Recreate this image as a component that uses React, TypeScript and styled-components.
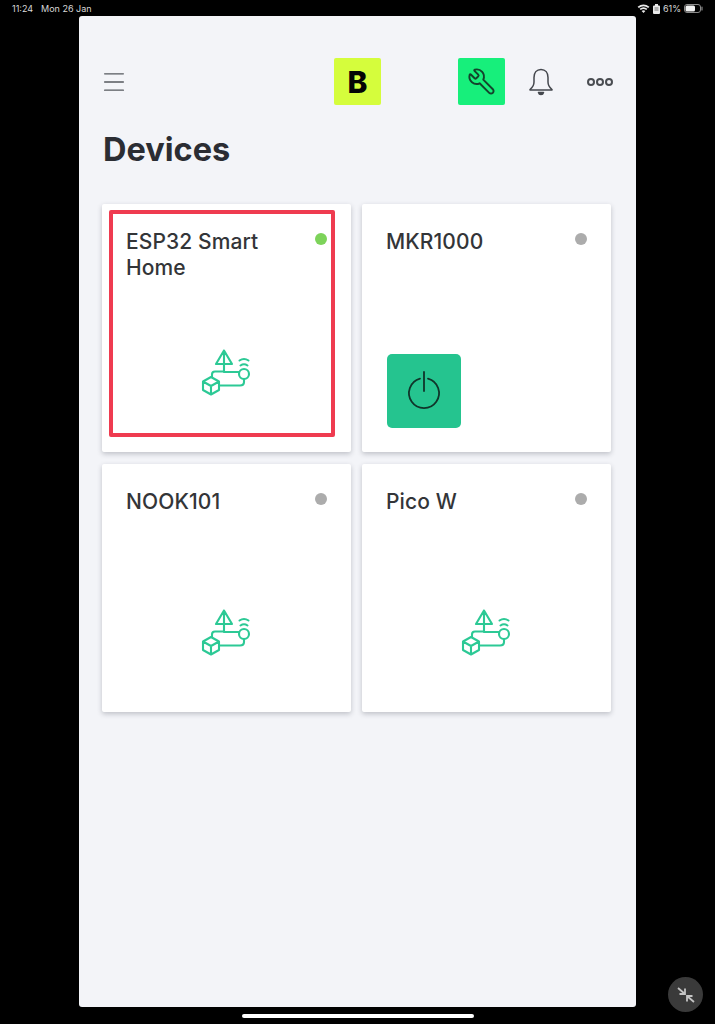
import React from 'react';
import styled, { createGlobalStyle } from 'styled-components';
import { Menu, Wrench } from 'lucide-react';

const GlobalStyle = createGlobalStyle`
  html, body {
    margin: 0;
    padding: 0;
    background: #000;
    font-family: Inter, "Liberation Sans", sans-serif;
  }
`;

const Screen = styled.div`
  position: relative;
  width: 715px;
  height: 1024px;
  overflow: hidden;
  background: #000;
`;

const StatusBar = styled.div`
  height: 16px;
  padding: 0 12px;
  display: flex;
  align-items: center;
  justify-content: space-between;
  color: #d8d8d8;
  font-size: 9px;
  box-sizing: border-box;
`;

const StatusLeft = styled.div`
  display: flex;
  gap: 8px;
  margin-top: 1px;
`;

const StatusRight = styled.div`
  display: flex;
  align-items: center;
  gap: 3px;
  margin-top: 1px;
`;

const Panel = styled.main`
  width: 557px;
  height: 991px;
  margin-left: 79px;
  padding: 0 22px 0 23px;
  box-sizing: border-box;
  background: #f3f4f8;
  border-radius: 3px;
`;

const Header = styled.header`
  height: 115px;
  padding-top: 42px;
  box-sizing: border-box;
  display: flex;
  align-items: flex-start;
`;

const MenuSlot = styled.div`
  width: 24px;
  height: 47px;
  display: flex;
  align-items: center;
  color: #55585e;
`;

const MenuIcon = styled(Menu)`
  flex-shrink: 0;
  margin-left: -2.5px;
`;

const Square = styled.div<{ $bg: string }>`
  flex: none;
  width: 47px;
  height: 47px;
  border-radius: 2px;
  background: ${(p) => p.$bg};
  display: flex;
  align-items: center;
  justify-content: center;
  color: #14432c;
`;

const Logo = styled(Square)`
  margin-left: 208px;
  color: #050505;
  font-size: 30px;
  font-weight: 800;
`;

const Tool = styled(Square)`
  margin-left: 77px;
`;

const ToolIcon = styled(Wrench)`
  transform: scaleX(-1);
`;

const BellSlot = styled.div`
  height: 47px;
  margin-left: 24px;
  display: flex;
  align-items: center;
  color: #44474d;
`;

const Dots = styled.div`
  height: 47px;
  margin-left: 34px;
  display: flex;
  align-items: center;
  gap: 1px;
`;

const Dot = styled.span`
  width: 8px;
  height: 8px;
  box-sizing: border-box;
  border: 2px solid #4a4d52;
  border-radius: 50%;
`;

const Title = styled.h1`
  margin: 0 0 0 1px;
  height: 73px;
  font-size: 32.5px;
  line-height: 38px;
  font-weight: 700;
  color: #2b2d33;
`;

const Grid = styled.section`
  display: grid;
  grid-template-columns: 249px 249px;
  grid-auto-rows: 248px;
  gap: 12px 11px;
`;

const Card = styled.article`
  position: relative;
  padding: 24px;
  box-sizing: border-box;
  background: #fff;
  border-radius: 2px;
  box-shadow: 0 2px 5px rgba(40, 44, 60, 0.25);
  display: flex;
  flex-direction: column;
  justify-content: space-between;
`;

const CardTop = styled.div`
  display: flex;
  justify-content: space-between;
  align-items: flex-start;
`;

const Name = styled.div`
  width: 160px;
  margin-top: 1px;
  font-size: 21px;
  line-height: 26px;
  font-weight: 500;
  letter-spacing: 0.1px;
  color: #333538;
`;

const Status = styled.span<{ $online?: boolean }>`
  width: 12px;
  height: 12px;
  margin-top: 5px;
  border-radius: 50%;
  background: ${(p) => (p.$online ? '#7dd35a' : '#acacac')};
`;

const Illustration = styled.div`
  display: flex;
  justify-content: center;
  margin: 0 3px 28px 0;
`;

const PowerButton = styled.div`
  width: 74px;
  height: 74px;
  margin-left: 1px;
  border-radius: 5px;
  background: #25c48f;
  display: flex;
  align-items: center;
  justify-content: center;
  color: #10352a;
`;

const Highlight = styled.div`
  position: absolute;
  left: 7px;
  top: 6px;
  width: 226px;
  height: 227px;
  box-sizing: border-box;
  border: 4px solid #ef3b50;
  border-radius: 2px;
`;

const FloatingButton = styled.div`
  position: absolute;
  left: 668px;
  top: 977px;
  width: 35px;
  height: 35px;
  border-radius: 50%;
  background: #3a3a3a;
  display: flex;
  align-items: center;
  justify-content: center;
`;

const HomeBar = styled.div`
  position: absolute;
  left: 242px;
  top: 1014px;
  width: 232px;
  height: 4px;
  border-radius: 2px;
  background: #fff;
`;

const DeviceIcon = () => (
  <svg width="70" height="60" viewBox="0 0 70 60" fill="none" stroke="#2cc995" strokeWidth="2.1" strokeLinejoin="round" strokeLinecap="round">
    <path d="M34 10.5 L26 24 H42 Z M34 10.5 V24" />
    <path d="M34 24 V31.5 H25 Q22 31.5 22 34.5 V37" />
    <path d="M34 32 H48.5" />
    <circle cx="54" cy="34" r="5" />
    <path d="M50.5 25.5 Q54 23 57.5 25.5 M49.5 20.5 Q54 17.5 58.5 20.5" />
    <path d="M21 37 L29 41.5 V50 L21 54.5 L13 50 V41.5 Z M13 41.5 L21 46 L29 41.5 M21 46 V54.5" />
    <path d="M29 45.5 H50 Q54 45.5 54 42 V39" />
  </svg>
);

const BellIcon = () => (
  <svg width="24" height="28" viewBox="0 0 24 28" fill="none" stroke="currentColor" strokeWidth="1.5" strokeLinecap="round" strokeLinejoin="round">
    <path d="M12 1.5 C7.5 1.5 5 5 5 9.5 V14 C5 17.5 3.5 19.5 1 21.5 V22 H23 V21.5 C20.5 19.5 19 17.5 19 14 V9.5 C19 5 16.5 1.5 12 1.5 Z" />
    <path d="M9.5 24.5 H14.5 Q14 26.5 12 26.5 Q10 26.5 9.5 24.5 Z" fill="currentColor" />
  </svg>
);

const PowerIcon = () => (
  <svg width="36" height="40" viewBox="0 0 36 40" fill="none" stroke="currentColor" strokeWidth="1.8" strokeLinecap="round">
    <path d="M14 7.6 A15 15 0 1 0 22 7.6" />
    <path d="M18 1 V20" />
  </svg>
);

const WifiIcon = () => (
  <svg width="13" height="9" viewBox="0 0 13 9" fill="#e8e8e8">
    <path d="M6.5 9 L4.6 6.9 Q6.5 5.5 8.4 6.9 Z M3.7 5.9 L2.6 4.7 Q6.5 1.7 10.4 4.7 L9.3 5.9 Q6.5 3.9 3.7 5.9 Z M1.8 3.9 L0.6 2.7 Q6.5 -1.6 12.4 2.7 L11.2 3.9 Q6.5 0.5 1.8 3.9 Z" />
  </svg>
);

const LockIcon = () => (
  <svg width="7" height="10" viewBox="0 0 7 10" fill="#e8e8e8">
    <path d="M2 0 H5 V1.5 H6 Q7 1.5 7 2.5 V9 Q7 10 6 10 H1 Q0 10 0 9 V2.5 Q0 1.5 1 1.5 H2 Z" />
    <path d="M1.5 4 H5.5 M1.5 6 H5.5" stroke="#555" strokeWidth="0.8" />
  </svg>
);

const BatteryIcon = () => (
  <svg width="19" height="9" viewBox="0 0 19 9" fill="none">
    <rect x="0.5" y="0.5" width="16" height="8" rx="2.5" stroke="#8a8a8a" />
    <rect x="1.5" y="1.5" width="9.5" height="6" rx="1.5" fill="#f0f0f0" />
    <path d="M18 3 V6" stroke="#8a8a8a" strokeWidth="1.2" strokeLinecap="round" />
  </svg>
);

const CollapseIcon = () => (
  <svg width="20" height="20" viewBox="0 0 20 20" fill="none" stroke="#c4c4c4" strokeWidth="1.8">
    <path d="M2 3 L9 9 M9 3.5 V9 H3.5" />
    <path d="M18 17 L11 11 M11 16.5 V11 H16.5" />
  </svg>
);

const devices = [
  { name: 'ESP32 Smart Home', online: true, highlighted: true },
  { name: 'MKR1000', power: true },
  { name: 'NOOK101' },
  { name: 'Pico W' },
];

export default function App() {
  return (
    <Screen>
      <GlobalStyle />
      <StatusBar>
        <StatusLeft>
          <span>11:24</span>
          <span>Mon 26 Jan</span>
        </StatusLeft>
        <StatusRight>
          <WifiIcon />
          <LockIcon />
          <span>61%</span>
          <BatteryIcon />
        </StatusRight>
      </StatusBar>
      <Panel>
        <Header>
          <MenuSlot>
            <MenuIcon size={28} strokeWidth={1.2} />
          </MenuSlot>
          <Logo $bg="#d5fd3c">B</Logo>
          <Tool $bg="#17ef7b">
            <ToolIcon size={29} strokeWidth={1.6} />
          </Tool>
          <BellSlot>
            <BellIcon />
          </BellSlot>
          <Dots>
            <Dot />
            <Dot />
            <Dot />
          </Dots>
        </Header>
        <Title>Devices</Title>
        <Grid>
          {devices.map((d) => (
            <Card key={d.name}>
              <CardTop>
                <Name>{d.name}</Name>
                <Status $online={d.online} />
              </CardTop>
              {d.power ? (
                <PowerButton>
                  <PowerIcon />
                </PowerButton>
              ) : (
                <Illustration>
                  <DeviceIcon />
                </Illustration>
              )}
              {d.highlighted && <Highlight />}
            </Card>
          ))}
        </Grid>
      </Panel>
      <FloatingButton>
        <CollapseIcon />
      </FloatingButton>
      <HomeBar />
    </Screen>
  );
}
